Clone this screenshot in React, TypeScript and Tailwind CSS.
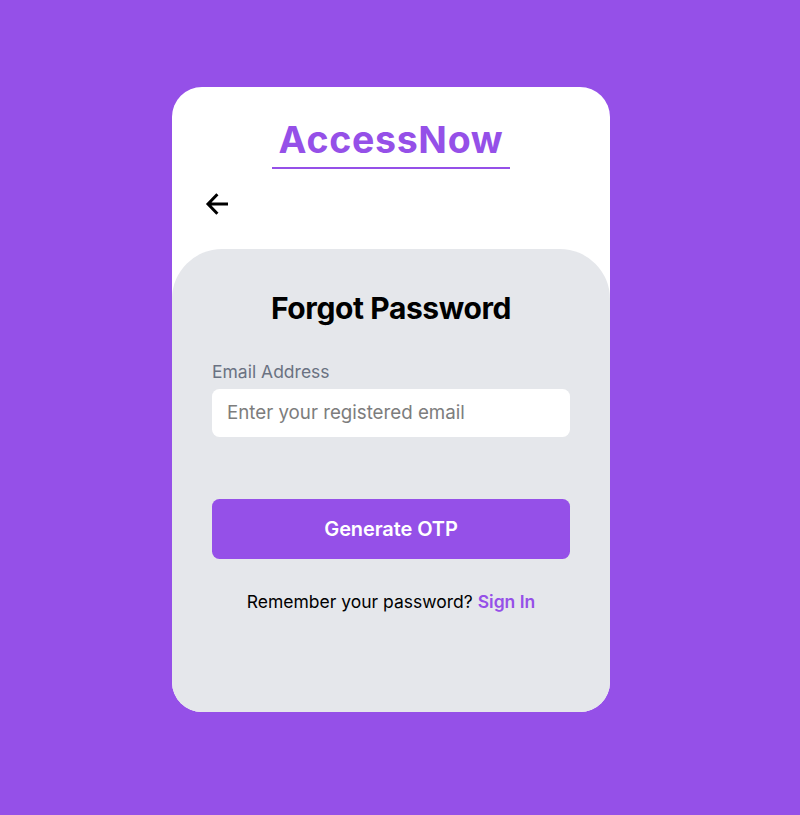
export default function App() {
  return (
    <main className="flex h-[815px] w-full justify-center bg-[#9550e8] pt-[87px] pr-[18px] font-['Inter',sans-serif] text-black">
      <section className="flex h-[625px] w-[438px] flex-col overflow-hidden rounded-[30px] bg-white">
        <header className="flex h-[162px] flex-col pt-[26px]">
          <h1 className="h-14 w-[238px] self-center border-b-2 border-[#9550e8] text-center text-[37.5px] leading-[54px] font-bold tracking-[0.7px] text-[#9550e8]">AccessNow</h1>
          <button aria-label="Back" className="mt-5 ml-[30px] h-[30px] w-[30px]">
            <svg viewBox="0 0 30 30" className="h-[30px] w-[30px]" fill="none" stroke="currentColor" strokeWidth="3">
              <path d="M26 15H7M15.4 5.2L6 15L15.4 24.8" />
            </svg>
          </button>
        </header>
        <div className="flex flex-1 flex-col rounded-t-[50px] bg-[#e5e7eb] px-10 pt-10">
          <h2 className="text-center text-[30px] leading-[38px] font-bold tracking-[-0.4px]">Forgot Password</h2>
          <label htmlFor="email" className="mt-[31px] text-[17.5px] leading-7 text-gray-500">Email Address</label>
          <input id="email" placeholder="Enter your registered email" className="mt-[3px] h-12 rounded-[7.5px] bg-white px-[15px] pb-0.5 text-[18.75px] tracking-[-0.02px] placeholder:text-[#7d7d7d]" />
          <button className="mt-[62px] h-[60px] rounded-[7.5px] bg-[#9550e8] text-xl font-semibold tracking-[-0.1px] text-white">Generate OTP</button>
          <p className="mt-[29px] text-center text-[17.5px] leading-7">Remember your password? <a href="#" className="font-semibold text-[#9550e8]">Sign In</a></p>
        </div>
      </section>
    </main>
  );
}
